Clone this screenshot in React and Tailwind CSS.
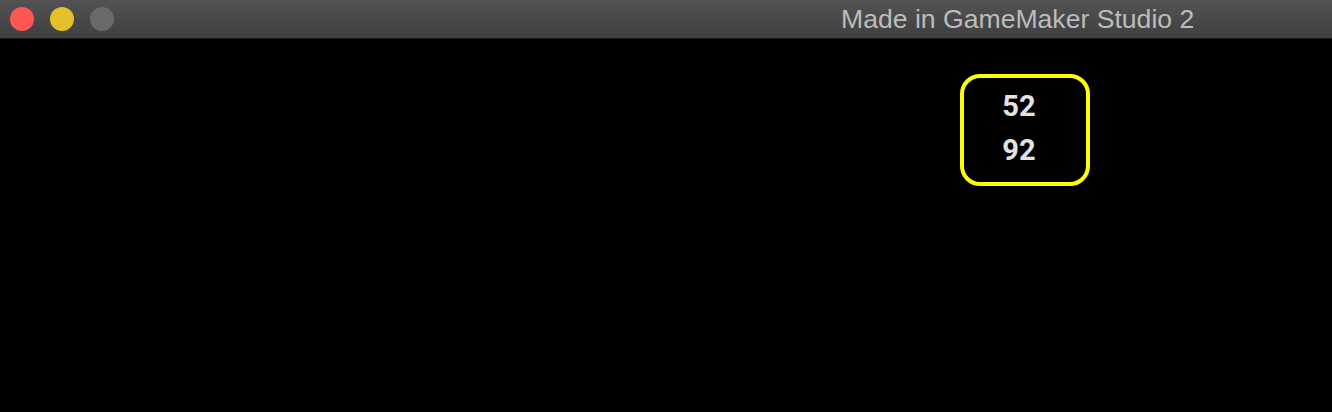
export default function App() {
  return (
    <div className="w-[1332px] h-[412px] bg-black flex flex-col overflow-hidden">
      <div className="h-[39px] shrink-0 bg-gradient-to-b from-[#535353] to-[#3f3f3f] border-b border-[#1a1a1a] flex items-center pl-[10px]">
        <div className="flex items-center gap-[16px]">
          <span className="w-[24px] h-[24px] rounded-full bg-[#fc5753]" />
          <span className="w-[24px] h-[24px] rounded-full bg-[#e6c02b]" />
          <span className="w-[24px] h-[24px] rounded-full bg-[#6a6a6a]" />
        </div>
        <div className="ml-[727px] text-[26.6px] text-[#bcbcbc] font-['Liberation_Sans',sans-serif] leading-none">
          Made in GameMaker Studio 2
        </div>
      </div>
      <div className="flex-1 pl-[960px] pt-[35px]">
        <div className="w-[130px] h-[112px] border-[4px] border-[#ffff00] rounded-[20px] flex flex-col items-center justify-center pr-[12px] pb-[5px] gap-[14px] font-['Roboto',sans-serif] font-bold text-[29px] text-[#e2e2e2] leading-[30px]">
          <span>52</span>
          <span>92</span>
        </div>
      </div>
    </div>
  );
}
